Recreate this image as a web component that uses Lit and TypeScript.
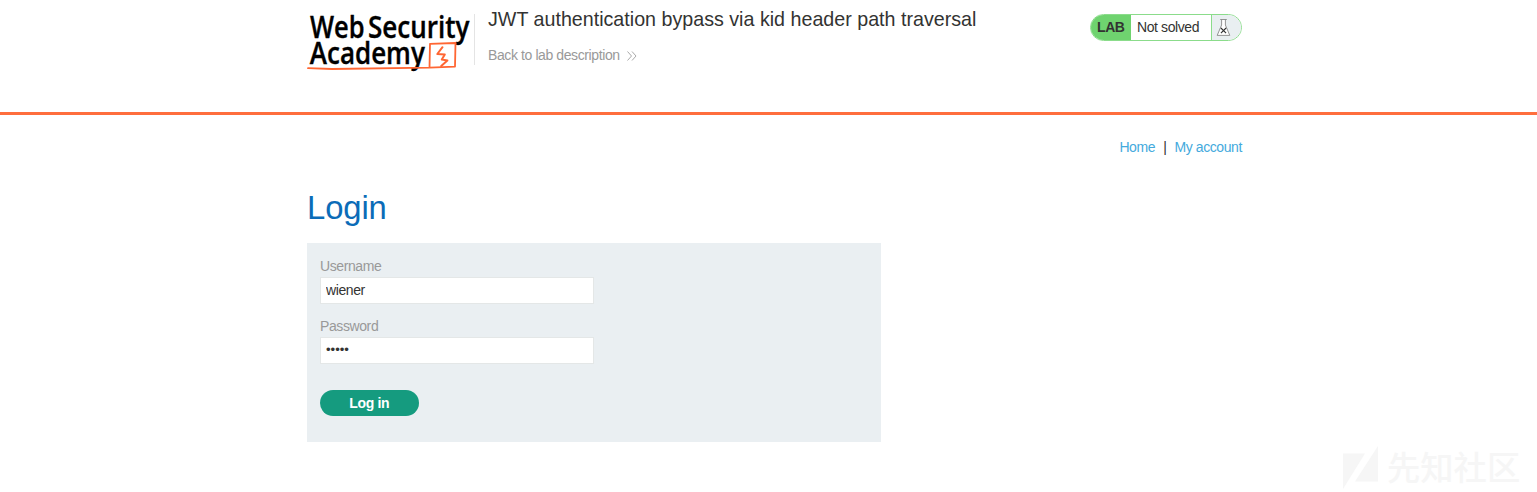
import { LitElement, html, css } from "lit";
import { customElement } from "lit/decorators.js";

@customElement("app-root")
export class AppRoot extends LitElement {
  static styles = css`
    :host { display: block; position: relative; height: 492px; overflow: hidden; background: #fff; font-family: "Liberation Sans", Arial, sans-serif; font-size: 14px; letter-spacing: -0.4px; color: #333332; }
    * { box-sizing: border-box; }
    .container { width: 935px; margin-left: 307px; }
    header { height: 115px; border-bottom: 3px solid #ff6e3d; }
    .head { display: flex; align-items: flex-start; }
    .logo { display: block; width: 167px; height: 75px; flex: none; overflow: visible; letter-spacing: 0; }
    .title { flex: 1; margin-top: 14px; height: 51px; border-left: 1px solid #e4e4e4; padding-left: 13px; }
    h2 { margin: -6px 0 0; font-weight: 400; font-size: 19.68px; letter-spacing: 0; line-height: 22px; white-space: nowrap; }
    .back { display: flex; align-items: center; gap: 7px; margin-top: 17px; line-height: 17px; color: #999; text-decoration: none; }
    .status { display: flex; margin-top: 14px; width: 152px; height: 27px; border: 1px solid #8bdc8b; border-radius: 14px; overflow: hidden; line-height: 25px; }
    .lab { width: 40px; background: #6fd36f; font-weight: 700; padding-left: 6px; }
    .state { flex: 1; padding-left: 6px; white-space: nowrap; }
    .flask { width: 30px; background: #e9eff1; border-left: 1px solid #8bdc8b; }
    .flask svg { display: block; }
    nav { display: flex; justify-content: flex-end; gap: 8px; padding-top: 24px; line-height: 17px; }
    nav a { color: #44aadd; text-decoration: none; }
    h1 { margin: 30px 0 0; font-weight: 400; font-size: 32.8px; letter-spacing: -0.1px; line-height: 44px; color: #0b6cb8; }
    form { margin-top: 13px; width: 574px; height: 199px; background: #eaeff2; padding: 15px 13px; }
    label { display: block; line-height: 17px; color: #999; }
    input { display: block; width: 274px; height: 27px; margin: 2px 0 14px; padding: 0 5px 2px; border: 1px solid #e4e7e7; border-radius: 0; background: #fff; font: inherit; letter-spacing: inherit; color: #333332; outline: none; }
    input[type="password"] { font-size: 13.12px; letter-spacing: 0; }
    button { display: block; margin-top: 26px; width: 98.5px; height: 26px; border: 0; border-radius: 13px; background: #159b7f; color: #fff; font: bold 14px "Liberation Sans", Arial, sans-serif; letter-spacing: -0.3px; padding: 0 0 1px; }
    .mark { position: absolute; left: 1343px; top: 444px; display: block; overflow: visible; letter-spacing: 0; }
  `;

  render() {
    return html`
      <header>
        <div class="container head">
          <svg class="logo" viewBox="0 0 167 75">
            <g font-family="Open Sans, Noto Sans, sans-serif" font-size="30" font-weight="600" fill="#000" stroke="#000" stroke-width=".35">
              <text x="3" y="37.5" textLength="54.5" lengthAdjust="spacingAndGlyphs">Web</text>
              <text x="61" y="37.5" textLength="101.5" lengthAdjust="spacingAndGlyphs">Security</text>
              <text x="2.8" y="64.2" textLength="115" lengthAdjust="spacingAndGlyphs">Academy</text>
            </g>
            <g fill="none" stroke="#ff6633" stroke-linejoin="round" stroke-linecap="round">
              <path d="M1 68.2 L25 69 L122.5 67.6 L123 43.8 L148.5 43 L148 66.6 L122.5 67.6" stroke-width="1.8" />
              <path d="M135.5 47.2 L130.3 54 L137.8 54.6 L134.8 59.6 L140.4 60.5 L134.2 66" stroke-width="2" />
            </g>
          </svg>
          <div class="title">
            <h2>JWT authentication bypass via kid header path traversal</h2>
            <a class="back">Back to lab description
              <svg width="10" height="10" viewBox="0 0 10 10" fill="none" stroke="#aaa" stroke-width="1"><path d="M.5 .5 L4.5 5 L.5 9.5 M5 .5 L9 5 L5 9.5" /></svg>
            </a>
          </div>
          <div class="status">
            <span class="lab">LAB</span><span class="state">Not solved</span>
            <span class="flask"><svg width="25" height="25" viewBox="0 0 25 25" fill="none">
              <path d="M8.2 4.5 H14.8 M9.6 4.5 V10 L5.2 20.4 H17.8 L13.4 10 V4.5" fill="#fff" stroke="#888" stroke-width=".9" />
              <path d="M8.9 13 L14.1 18.2 M14.1 13 L8.9 18.2" stroke="#333" stroke-width="1.1" />
            </svg></span>
          </div>
        </div>
      </header>
      <main class="container">
        <nav><a>Home</a><span>|</span><a>My account</a></nav>
        <h1>Login</h1>
        <form>
          <label>Username</label>
          <input type="text" .value=${"wiener"} />
          <label>Password</label>
          <input type="password" .value=${"peter"} />
          <button type="button">Log in</button>
        </form>
      </main>
      <svg class="mark" width="180" height="46" viewBox="0 0 180 46" fill="#f6f6f6">
        <path d="M0 9.5 H22 L0 45 Z M35 2 V37.5 H12 Z" />
        <text x="44" y="36" font-family="Noto Sans CJK SC, sans-serif" font-weight="500" font-size="33.3">先知社区</text>
      </svg>
    `;
  }
}
